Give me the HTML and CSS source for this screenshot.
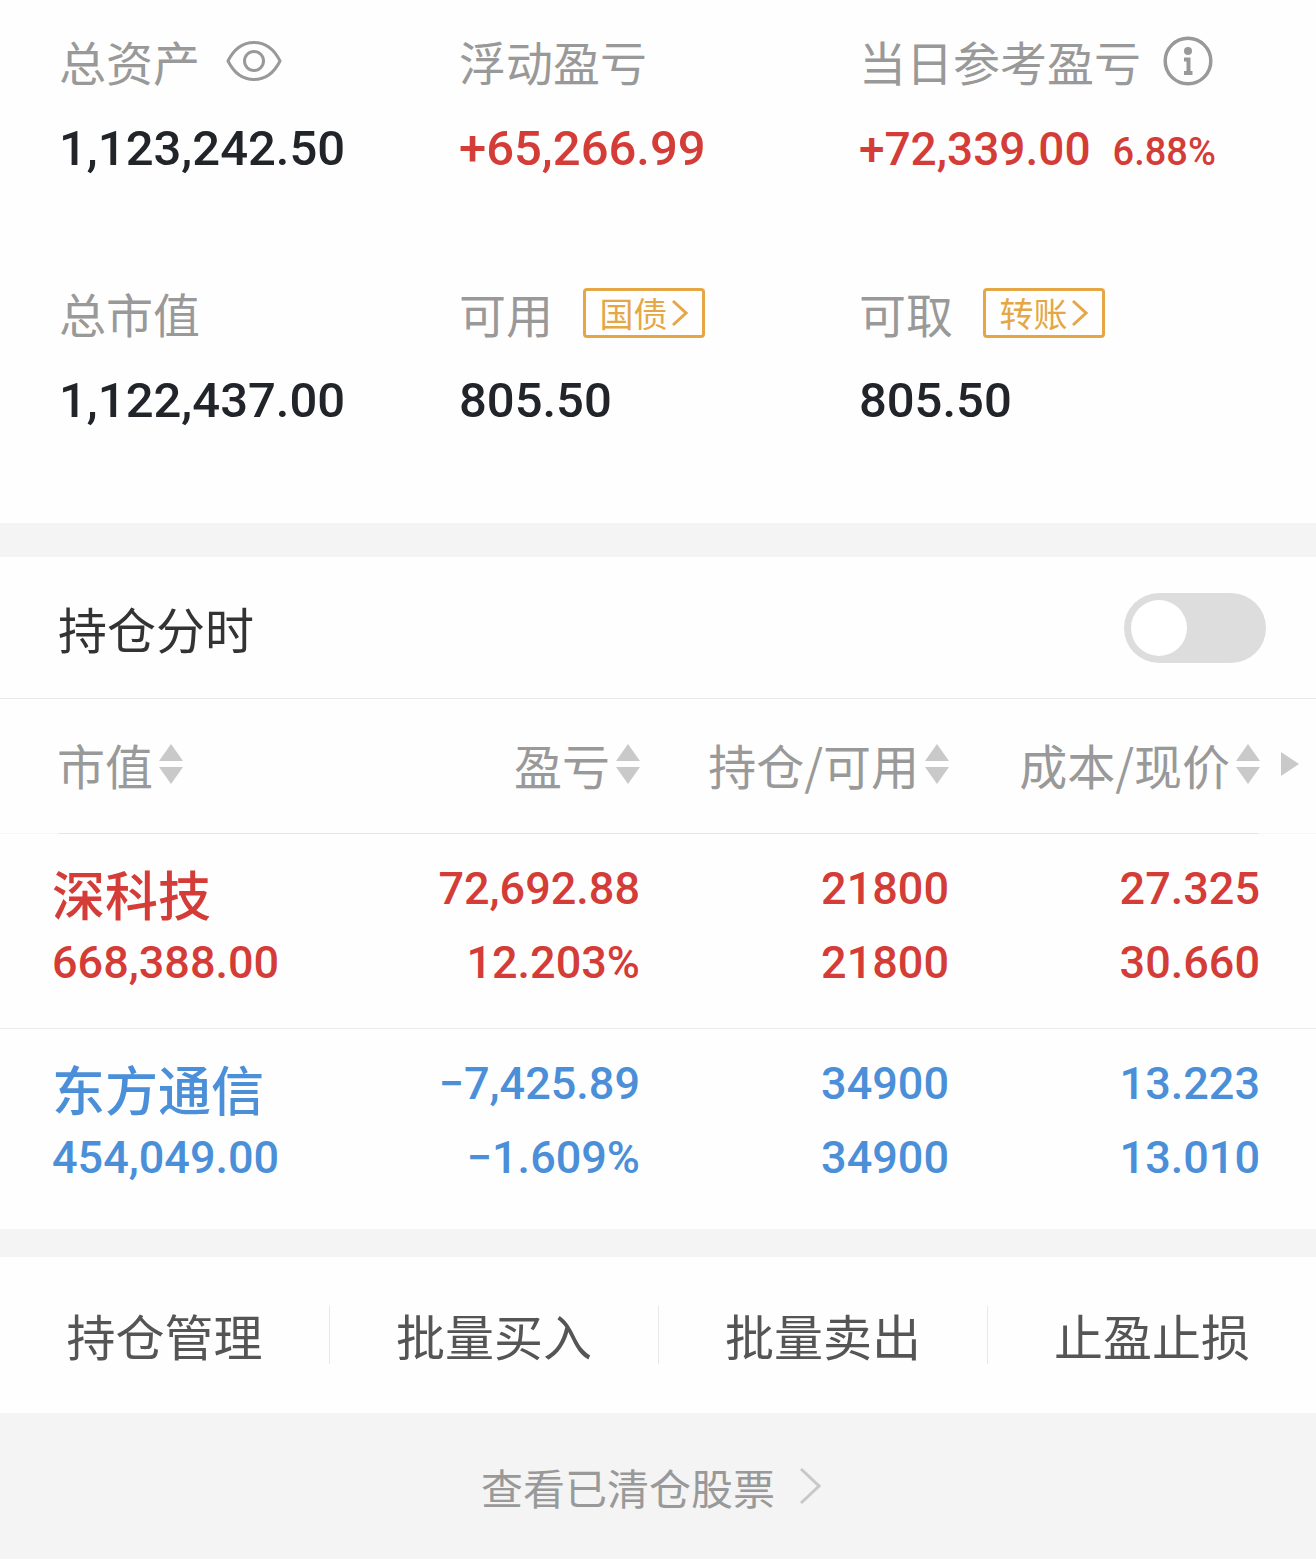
FILE: index.html
```html
<!DOCTYPE html>
<html lang="zh-CN">
<head>
<meta charset="utf-8">
<meta name="viewport" content="width=device-width, initial-scale=1">
<title>持仓</title>
<link rel="stylesheet" href="styles.css">
</head>
<body>
<main>
  <section class="summary">
    <div class="metric">
      <div class="metric-label">总资产
        <button class="icon-button eye" type="button" aria-label="隐藏资产">
          <svg width="56" height="42" viewBox="0 0 56 42" fill="none" stroke="#999" stroke-width="3"><path d="M2 21C8 9 17 2.500 28 2.500S48 9 54 21C48 33 39 39.500 28 39.500S8 33 2 21Z" stroke-linejoin="round"/><circle cx="28" cy="21" r="9.500"/></svg>
        </button>
      </div>
      <div class="metric-value">1,123,242.50</div>
    </div>
    <div class="metric">
      <div class="metric-label">浮动盈亏</div>
      <div class="metric-value up">+65,266.99</div>
    </div>
    <div class="metric">
      <div class="metric-label">当日参考盈亏
        <button class="icon-button info" type="button" aria-label="说明">
          <svg width="50" height="50" viewBox="0 0 50 50" fill="none" stroke="#999"><circle cx="25" cy="25" r="22.800" stroke-width="3.500"/><circle cx="25" cy="15" r="4" fill="#999" stroke="none"/><path d="M21 23.500H25.500V36.500M21 37H29.500" stroke-width="4"/></svg>
        </button>
      </div>
      <div class="metric-value daily up">+72,339.00<span class="rate">6.88%</span></div>
    </div>
    <div class="metric">
      <div class="metric-label">总市值</div>
      <div class="metric-value">1,122,437.00</div>
    </div>
    <div class="metric">
      <div class="metric-label">可用
        <button class="tag" type="button">国债<svg width="17" height="28" viewBox="0 0 17 28" fill="none" stroke="currentColor" stroke-width="3"><path d="M2 2L15 14L2 26"/></svg></button>
      </div>
      <div class="metric-value">805.50</div>
    </div>
    <div class="metric">
      <div class="metric-label">可取
        <button class="tag" type="button">转账<svg width="17" height="28" viewBox="0 0 17 28" fill="none" stroke="currentColor" stroke-width="3"><path d="M2 2L15 14L2 26"/></svg></button>
      </div>
      <div class="metric-value">805.50</div>
    </div>
  </section>

  <section class="positions">
    <div class="chart-toggle">
      <label for="intraday">持仓分时</label>
      <input class="switch" id="intraday" type="checkbox" role="switch">
    </div>
    <table class="holdings">
      <colgroup><col><col class="col-profit"><col class="col-amount"><col class="col-price"><col class="col-more"></colgroup>
      <thead>
        <tr>
          <th scope="col"><button class="sort" type="button">市值<svg width="24" height="40" viewBox="0 0 24 40" fill="#c9c9c9"><path d="M12 0L24 17H0ZM0 23H24L12 40Z"/></svg></button></th>
          <th scope="col"><button class="sort" type="button">盈亏<svg width="24" height="40" viewBox="0 0 24 40" fill="#c9c9c9"><path d="M12 0L24 17H0ZM0 23H24L12 40Z"/></svg></button></th>
          <th scope="col"><button class="sort" type="button">持仓/可用<svg width="24" height="40" viewBox="0 0 24 40" fill="#c9c9c9"><path d="M12 0L24 17H0ZM0 23H24L12 40Z"/></svg></button></th>
          <th scope="col"><button class="sort" type="button">成本/现价<svg width="24" height="40" viewBox="0 0 24 40" fill="#c9c9c9"><path d="M12 0L24 17H0ZM0 23H24L12 40Z"/></svg></button></th>
          <th class="more"><button class="icon-button" type="button" aria-label="更多列"><svg width="18" height="24" viewBox="0 0 18 24" fill="#c9c9c9"><path d="M0 0L18 12L0 24Z"/></svg></button></th>
        </tr>
      </thead>
      <tbody>
        <tr class="up">
          <td><div class="stock">深科技</div><div>668,388.00</div></td>
          <td><div>72,692.88</div><div>12.203%</div></td>
          <td><div>21800</div><div>21800</div></td>
          <td><div>27.325</div><div>30.660</div></td>
          <td></td>
        </tr>
        <tr class="down">
          <td><div class="stock">东方通信</div><div>454,049.00</div></td>
          <td><div>−7,425.89</div><div>−1.609%</div></td>
          <td><div>34900</div><div>34900</div></td>
          <td><div>13.223</div><div>13.010</div></td>
          <td></td>
        </tr>
      </tbody>
    </table>
  </section>

  <nav class="actions">
    <button type="button">持仓管理</button>
    <button type="button">批量买入</button>
    <button type="button">批量卖出</button>
    <button type="button">止盈止损</button>
  </nav>
</main>
<footer class="cleared">
  <a href="#cleared">查看已清仓股票<svg width="22" height="38" viewBox="0 0 22 38" fill="none" stroke="#c8c8c8" stroke-width="3"><path d="M2 2L20 19L2 36"/></svg></a>
</footer>
</body>
</html>
```
FILE: styles.css
```css
* {
  box-sizing: border-box;
}

body {
  margin: 0;
  background: #f4f4f4;
  color: #212429;
  font-family: Roboto, "Noto Sans CJK SC", sans-serif;
}

button {
  padding: 0;
  border: 0;
  background: none;
  color: inherit;
  font: inherit;
}

svg {
  display: block;
  flex: none;
}

.up {
  color: #d43c37;
}

.down {
  color: #4a8fd8;
}

.summary {
  display: grid;
  grid-template-columns: 7fr 7fr 8fr;
  row-gap: 106px;
  padding: 33px 0 92px 59px;
  background: #fefefe;
}

.metric-label {
  display: flex;
  align-items: center;
  height: 56px;
  margin-bottom: 30px;
  color: #999;
  font-family: "Noto Sans CJK SC", sans-serif;
  font-size: 47px;
  line-height: 56px;
  white-space: nowrap;
}

.metric-value {
  height: 60px;
  font-size: 49px;
  font-weight: 500;
  line-height: 60px;
  white-space: nowrap;
}

.metric-value.daily {
  font-size: 46px;
}

.rate {
  margin-left: 22px;
  font-size: 38px;
  line-height: 40px;
}

.eye {
  margin-left: 26px;
}

.info {
  margin-left: 22px;
}

.tag {
  display: flex;
  align-items: center;
  justify-content: center;
  gap: 4px;
  width: 122px;
  height: 50px;
  margin-left: 30px;
  border: 3px solid #e5a745;
  border-radius: 4px;
  color: #e5a745;
  font-size: 34px;
  line-height: 40px;
}

.positions {
  margin-top: 34px;
  padding-bottom: 6px;
  background: #fefefe;
}

.chart-toggle {
  display: flex;
  align-items: center;
  justify-content: space-between;
  height: 142px;
  padding: 0 50px 0 58px;
  border-bottom: 1px solid #e8e8e8;
  color: #333;
  font-family: "Noto Sans CJK SC", sans-serif;
  font-size: 49px;
}

.switch {
  width: 142px;
  height: 70px;
  margin: 0;
  padding: 7px;
  border-radius: 35px;
  background: #ddd;
  appearance: none;
}

.switch::before {
  display: block;
  width: 56px;
  height: 56px;
  border-radius: 50%;
  background: #fff;
  content: "";
}

.switch:checked::before {
  margin-left: auto;
}

.holdings {
  width: 100%;
  border-collapse: collapse;
  table-layout: fixed;
}

.col-profit {
  width: 300px;
}

.col-amount {
  width: 309px;
}

.col-price {
  width: 311px;
}

.col-more {
  width: 56px;
}

.holdings thead tr {
  height: 135px;
  background: linear-gradient(to right, #f6f6f6 58px, #e6e6e6 58px calc(100% - 58px), #f6f6f6 calc(100% - 58px)) bottom / 100% 1px no-repeat;
}

.holdings th {
  padding: 0 0 6px;
  color: #999;
  font-family: "Noto Sans CJK SC", sans-serif;
  font-size: 48px;
  font-weight: 400;
  text-align: right;
  white-space: nowrap;
}

.holdings th:first-child {
  padding-left: 57px;
  text-align: left;
}

.sort {
  display: inline-flex;
  align-items: center;
  gap: 6px;
  line-height: 60px;
}

.more .icon-button {
  display: block;
  margin-left: 21px;
}

.holdings td {
  padding: 18px 0 28px;
  font-size: 45px;
  font-weight: 500;
  line-height: 74px;
  text-align: right;
  white-space: nowrap;
}

.holdings td:first-child {
  padding-left: 52px;
  text-align: left;
}

.holdings tbody tr + tr {
  border-top: 1px solid #ececec;
}

.holdings .stock {
  padding-top: 8px;
  font-family: "Noto Sans CJK SC", sans-serif;
  font-size: 53px;
  line-height: 66px;
}

.actions {
  display: grid;
  grid-template-columns: repeat(4, 1fr);
  align-items: center;
  height: 156px;
  margin-top: 28px;
  background: #fefefe;
}

.actions button {
  height: 58px;
  color: #555;
  font-family: "Noto Sans CJK SC", sans-serif;
  font-size: 49px;
  line-height: 58px;
}

.actions button + button {
  border-left: 1px solid #e8e8e8;
}

.cleared {
  display: flex;
  align-items: center;
  justify-content: center;
  height: 146px;
}

.cleared a {
  display: flex;
  align-items: center;
  gap: 24px;
  padding-right: 14px;
  color: #999;
  font-family: "Noto Sans CJK SC", sans-serif;
  font-size: 42px;
  text-decoration: none;
}
```
